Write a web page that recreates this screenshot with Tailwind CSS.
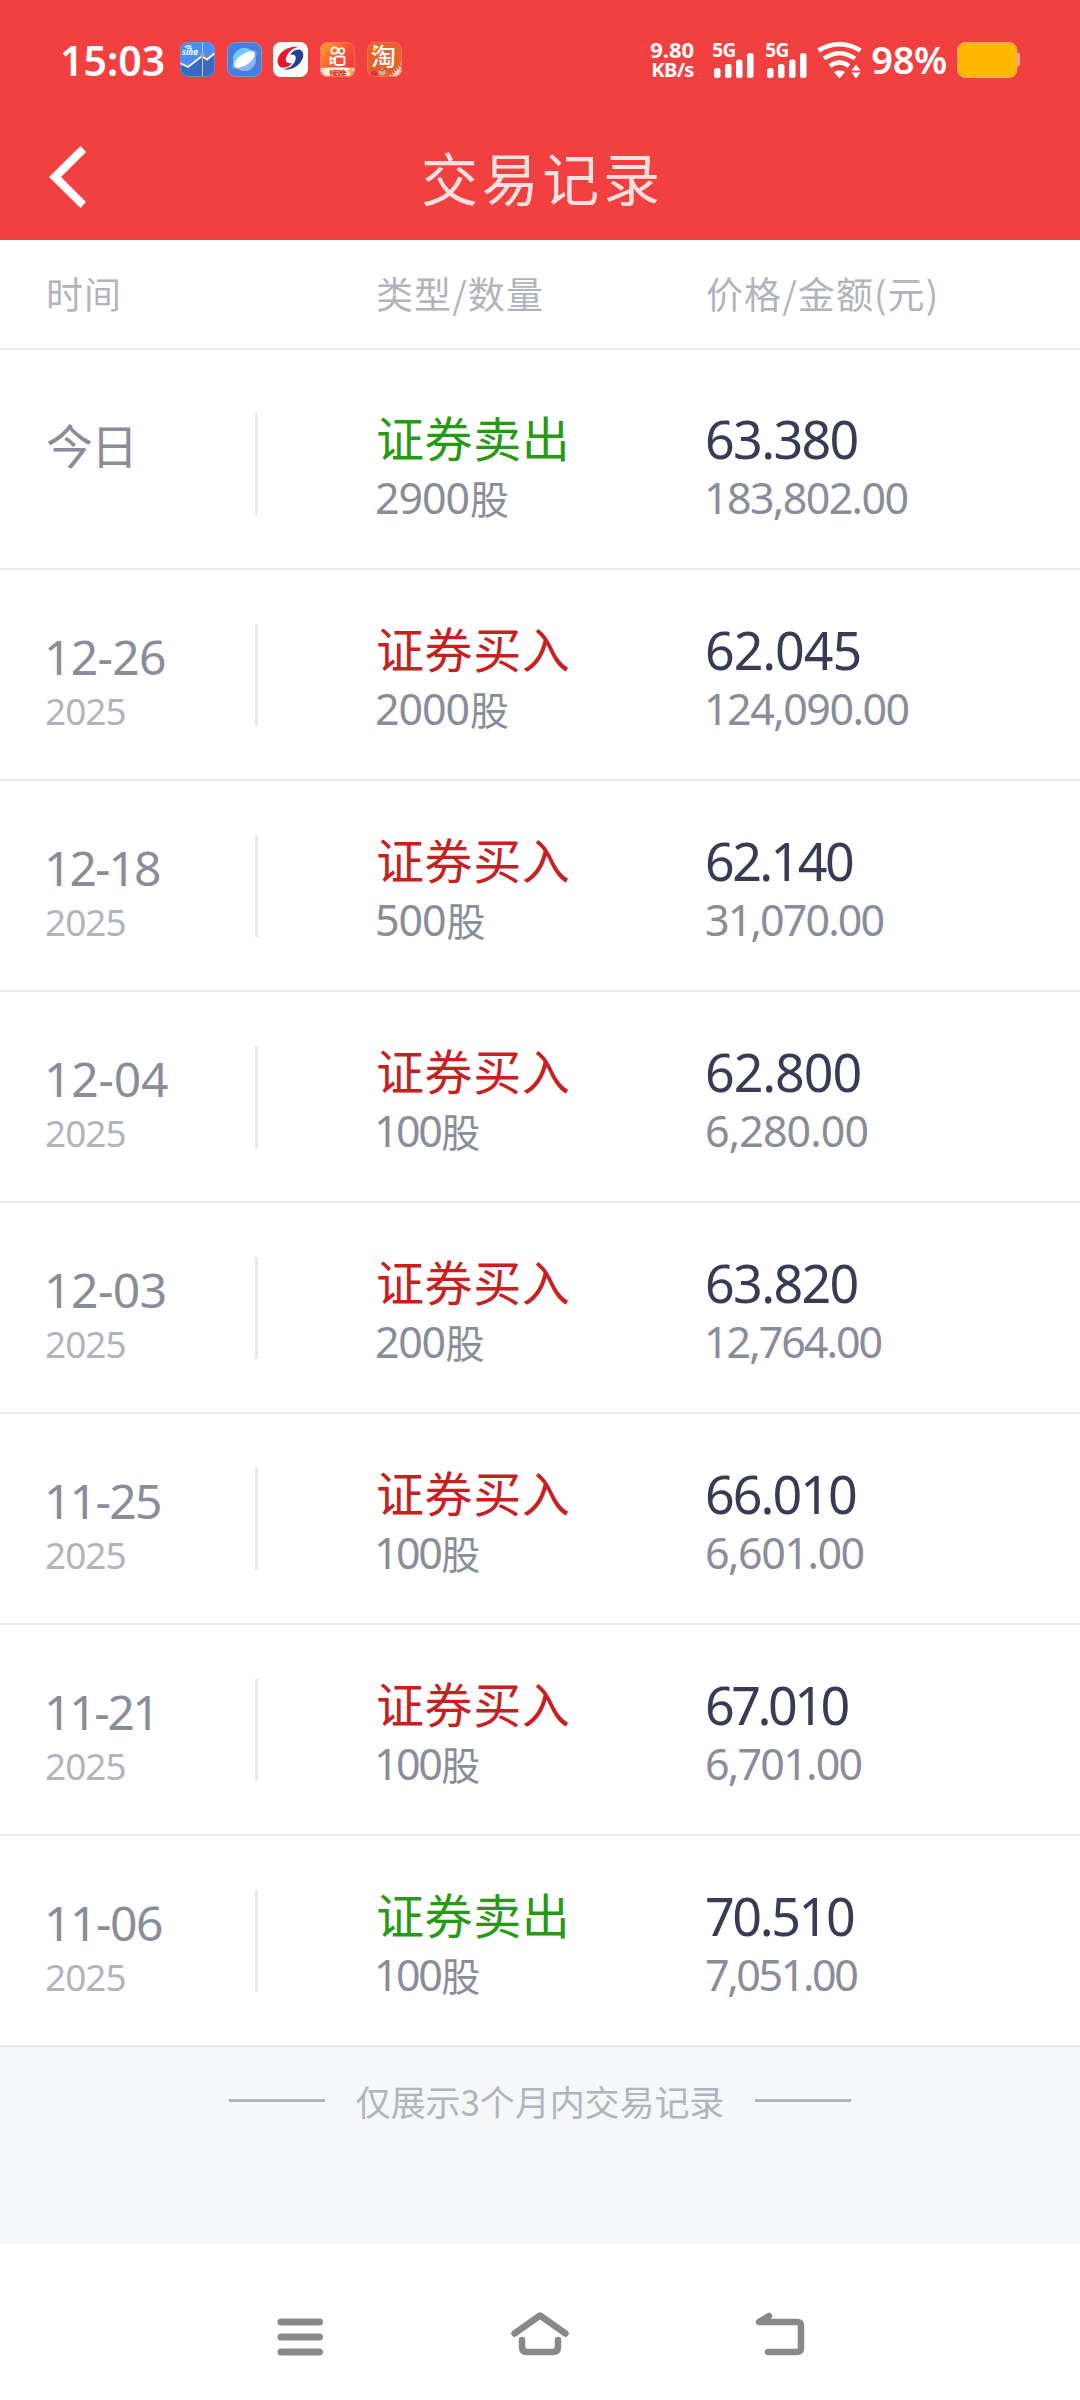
<!DOCTYPE html>
<html lang="zh-CN">
<head>
<meta charset="utf-8">
<title>交易记录</title>
<script src="https://cdn.jsdelivr.net/npm/@tailwindcss/browser@4"></script>
</head>
<body class="w-[1080px] h-[2400px] overflow-hidden bg-white flex flex-col whitespace-nowrap font-['Noto_Sans','Noto_Sans_CJK_SC',sans-serif]">
<header class="h-60 shrink-0 bg-[#f24040] text-white">
  <!-- status bar -->
  <div class="h-[118px] flex items-start">
    <div class="w-[119px] ml-[60px] mt-[35px] text-[41px] leading-[50px] font-semibold">15:03</div>
    <div class="flex gap-[11.7px] mt-[42px] ml-px">
      <svg class="w-[35px] h-[35px]" viewBox="0 0 35 35"><defs><clipPath id="a"><rect width="35" height="35" rx="8"/></clipPath></defs><g clip-path="url(#a)"><rect width="35" height="35" fill="#4a8dff"/><path d="M0 21L8 25 22 13 27 17 35 11V35H0Z" fill="#366bc1"/><path d="M0 21L8 25 22 14 27 17.500 35 11" fill="none" stroke="#fff" stroke-width="1.800"/><path d="M22.500 0V35" stroke="#d9c9a8" stroke-width="1"/><circle cx="22.500" cy="13.500" r="2" fill="#e5a33c"/><path d="M5 5.500Q8 2 12 5M7 7Q9 4.500 12 7.500" fill="none" stroke="#fff" stroke-width="1.300"/></g><text x="2" y="12.500" font-size="8" font-style="italic" font-weight="700" fill="#fff" textLength="16">sina</text><rect x=".5" y=".5" width="34" height="34" rx="8" fill="none" stroke="#8593d6" stroke-opacity=".7"/></svg>
      <svg class="w-[35px] h-[35px]" viewBox="0 0 35 35"><rect x=".5" y=".5" width="34" height="34" rx="8" fill="#447fdf" stroke="#8593d6"/><ellipse cx="17.500" cy="17.500" rx="14.500" ry="6" transform="rotate(-35 17.500 17.500)" fill="#6c9fe8"/><circle cx="17.500" cy="17.500" r="11.500" fill="#8fb4ef"/><path d="M7 22A11.500 11.500 0 0 1 27 11Z" fill="#68cdf8"/><ellipse cx="17.500" cy="17.500" rx="12" ry="5.500" transform="rotate(-35 17.500 17.500)" fill="#fff"/></svg>
      <svg class="w-[35px] h-[35px]" viewBox="0 0 35 35"><rect width="35" height="35" rx="8" fill="#fff"/><path d="M25 5C14 3 2 13 5 22C7 28 16 26 19 21C14 22 11 19 14 14C16 9 20 6 25 5Z" fill="#e5192d"/><path d="M10 27C21 30 32 19 30 11C28 5 20 7 17 13C22 11 24 15 22 19C20 24 15 27 10 27Z" fill="#243f94"/></svg>
      <svg class="w-[35px] h-[35px]" viewBox="0 0 35 35"><defs><linearGradient id="g" x1="0" y1="0" x2="1" y2=".8"><stop stop-color="#ffac30"/><stop offset=".5" stop-color="#ff5a2d"/><stop offset="1" stop-color="#fb2c49"/></linearGradient><clipPath id="b"><rect width="35" height="35" rx="8"/></clipPath></defs><g clip-path="url(#b)"><rect width="35" height="35" fill="url(#g)"/><path d="M0 26Q17 24.500 35 26V35H0Z" fill="#ffefd8"/><path d="M28 29L31 25 34 30 31 33Z" fill="#ffb238"/></g><g fill="none" stroke="#fff" stroke-width="1.800"><circle cx="14.500" cy="8.500" r="3.200"/><circle cx="21.500" cy="9" r="2.800"/><rect x="15" y="14.500" width="9.500" height="8.500" rx="2"/><path d="M15 18L10.500 15.500V21.500L15 19.500"/></g><text x="9" y="33.500" font-size="7" font-weight="900" fill="#d8372c" textLength="18">领现金</text><rect x=".5" y=".5" width="34" height="34" rx="8" fill="none" stroke="#f97556"/></svg>
      <svg class="w-[35px] h-[35px]" viewBox="0 0 35 35"><defs><clipPath id="c"><rect width="35" height="35" rx="8"/></clipPath></defs><g clip-path="url(#c)"><rect width="35" height="35" fill="#e9602c"/><path d="M21 35L35 19V35Z" fill="#f4d3c3"/><path d="M24 33L34 22" stroke="#dd6141" stroke-width="3" stroke-dasharray="2 1"/><circle cx="7" cy="32" r="3.500" fill="#e22d43"/><circle cx="15" cy="30" r="3.500" fill="#d9ad93"/><path d="M12 27L15 29 18 27" stroke="#7b3c28" fill="none"/><circle cx="7.500" cy="7" r="2" fill="#ffc53b"/></g><text x="4" y="23.500" font-size="25" font-weight="500" fill="#fff" font-family="Noto Sans CJK SC">淘</text><rect x=".5" y=".5" width="34" height="34" rx="8" fill="none" stroke="#ee7347"/></svg>
    </div>
    <div class="ml-[248.500px] mt-[39px] w-[62px] font-bold text-[22px] leading-[21px]"><div>9.80</div><div class="text-[20px] leading-5 tracking-[-0.600px] ml-px">KB/s</div></div>
    <div class="relative w-[53px] mt-10 text-[19px] leading-5 font-bold tracking-[-0.500px]">5G<svg class="absolute left-px top-3 w-[42px] h-[27px]" viewBox="0 0 42 27" fill="#fff"><rect x="1" y="16" width="6.500" height="10" rx="2.500"/><rect x="12" y="12" width="6.500" height="14" rx="2.500"/><rect x="23" y="7.500" width="6.500" height="18.500" rx="2.500"/><rect x="34" y="1" width="6.500" height="25" rx="2.500"/></svg></div>
    <div class="relative w-[53px] mt-10 text-[19px] leading-5 font-bold tracking-[-0.500px]">5G<svg class="absolute left-px top-3 w-[42px] h-[27px]" viewBox="0 0 42 27" fill="#fff"><rect x="1" y="16" width="6.500" height="10" rx="2.500"/><rect x="12" y="12" width="6.500" height="14" rx="2.500"/><rect x="23" y="7.500" width="6.500" height="18.500" rx="2.500"/><rect x="34" y="1" width="6.500" height="25" rx="2.500"/></svg></div>
    <svg class="w-[45px] h-[37px] mt-[42px] -ml-px" viewBox="0 0 45 37"><g fill="none" stroke="#fff" stroke-width="4.500"><path d="M1.500 8.500Q22.500 -4 43.500 8.500"/><path d="M7 16.500Q22.500 6 38 16.500"/><path d="M13 24Q22.500 17 32 24"/></g><path d="M17 30Q22.500 26.500 28 30L22.500 36.500ZM34.500 28.500H43.500L39 22.500ZM34.500 30.500H43.500L39 36.500Z" fill="#fff"/></svg>
    <div class="w-[86px] ml-[9px] mt-[34px] text-[38px] leading-[50px] font-semibold tracking-[-0.300px]">98%</div>
    <svg class="w-[64px] h-[36px] mt-[42px]" viewBox="0 0 64 36"><path d="M59 11H61Q63 11 63 13V22Q63 24 61 24H59Z" fill="#fba6a6"/><rect x=".500" y=".500" width="59.500" height="35" rx="8" fill="#ffb800" stroke="#f6a878"/></svg>
  </div>
  <!-- title bar -->
  <div class="h-[122px] flex items-start">
    <svg class="w-[37px] h-[62px] ml-[49px] mt-[28px]" viewBox="0 0 37 62"><path d="M0 31L31.500 0 37 6 12 31 37 56 31.500 62Z" fill="#fff"/></svg>
    <h1 class="ml-[335px] -mt-[3px] text-[57px] leading-[122px] tracking-[3.670px] text-[#fbe0e0] font-['Noto_Sans_CJK_SC',sans-serif]">交易记录</h1>
  </div>
</header>
<div class="h-[110px] shrink-0 border-b-2 border-[#e9e9e9] flex text-[37px] leading-[107px] tracking-[1.100px] text-[#b1b4bd] font-['Noto_Sans_CJK_SC',sans-serif]">
  <div class="w-[330px] pl-[46px]">时间</div><div class="w-[330px] pl-[46px]">类型/数量</div><div class="pl-[46px]">价格/金额(元)</div>
</div>
<main id="list" class="shrink-0"></main>
<footer class="h-[197px] shrink-0 bg-[#f6f7f9]">
  <div class="h-[107px] flex items-center justify-center gap-[31px]">
    <i class="w-24 h-[3px] bg-[#b0b4be]"></i><span class="text-[35px] leading-[106px] tracking-[-0.090px] text-[#b0b4be] font-['Noto_Sans_CJK_SC',sans-serif]">仅展示3个月内交易记录</span><i class="w-24 h-[3px] bg-[#b0b4be]"></i>
  </div>
</footer>
<nav class="flex-1 bg-white flex justify-center gap-[180px] pt-[65px]">
  <svg class="w-[60px] h-[50px]" viewBox="270 2309 60 50" stroke="#898989" stroke-width="7" stroke-linecap="round"><path d="M281 2322H319.500M281 2337H319.500M281 2352H319.500"/></svg>
  <svg class="w-[60px] h-[50px]" viewBox="510 2309 60 50" fill="none" stroke="#898989" stroke-width="6.500" stroke-linecap="round" stroke-linejoin="round"><path d="M514.500 2333.500L540 2315.500 565.500 2333.500M522 2340V2347Q522 2352 527 2352H553Q558 2352 558 2347V2340"/></svg>
  <svg class="w-[60px] h-[50px]" viewBox="750 2309 60 50" fill="none" stroke="#898989" stroke-width="6.500" stroke-linecap="round" stroke-linejoin="round"><path d="M769 2316L759 2322H797Q801 2322 801 2326V2348Q801 2352 797 2352H768"/></svg>
</nav>
<script>
// Each text is [value, letter-spacing class]; the digit 1 is set tighter than the others.
const rows = [
  { date: ['今日', ''], sell: true, qty: ['2900', 'tracking-[-1.100px]'], price: ['63.380', 'tracking-[-1.680px]'], sum: ['183,802.00', 'tracking-[-1.640px]'] },
  { date: ['12-26', 'tracking-[-0.710px]'], qty: ['2000', 'tracking-[-1.100px]'], price: ['62.045', 'tracking-[-1.100px]'], sum: ['124,090.00', 'tracking-[-1.520px]'] },
  { date: ['12-18', 'tracking-[-1.960px]'], qty: ['500', 'tracking-[-1.100px]'], price: ['62.140', 'tracking-[-2.600px]'], sum: ['31,070.00', 'tracking-[-1.890px]'] },
  { date: ['12-04', 'tracking-[-0.210px]'], qty: ['100', 'tracking-[-2.500px]'], price: ['62.800', 'tracking-[-1.100px]'], sum: ['6,280.00', 'tracking-[-0.930px]'] },
  { date: ['12-03', 'tracking-[-0.500px]'], qty: ['200', 'tracking-[-1.400px]'], price: ['63.820', 'tracking-[-1.680px]'], sum: ['12,764.00', 'tracking-[-2.020px]'] },
  { date: ['11-25', 'tracking-[-1.710px]'], qty: ['100', 'tracking-[-2.500px]'], price: ['66.010', 'tracking-[-2px]'], sum: ['6,601.00', 'tracking-[-1.500px]'] },
  { date: ['11-21', 'tracking-[-2.300px]'], qty: ['100', 'tracking-[-2.500px]'], price: ['67.010', 'tracking-[-3.480px]'], sum: ['6,701.00', 'tracking-[-1.790px]'] },
  { date: ['11-06', 'tracking-[-1.460px]'], sell: true, qty: ['100', 'tracking-[-2.500px]'], price: ['70.510', 'tracking-[-2.400px]'], sum: ['7,051.00', 'tracking-[-2.400px]'] },
];
document.getElementById('list').innerHTML = rows.map(r => {
  const today = r.date[0] === '今日';
  const date = today
    ? `<div class="text-[47px] leading-[56px] tracking-[-2px] font-['Noto_Sans_CJK_SC',sans-serif]">今日</div>`
    : `<div class="text-[48px] leading-[60px] -ml-[2px] ${r.date[1]}">${r.date[0]}</div><div class="mt-1 text-[37px] leading-10 -ml-px tracking-[-1px] text-[#b1b4bd]">2025</div>`;
  const name = r.sell ? '<span class="text-[#279a14]">证券卖出</span>' : '<span class="text-[#c7201f]">证券买入</span>';
  const qx = r.qty[0][0] === '1' ? '-ml-[2px]' : '-ml-px';
  const sx = r.sum[0][0] === '1' ? '-ml-[2px]' : '-ml-px';
  return `<section class="${today ? 'h-[220px] pt-[9px]' : 'h-[211px]'} border-b-2 border-[#e9e9e9] flex text-[#898d99]">
    <div class="w-[255px] pl-[46px] pt-[57px]">${date}</div>
    <div class="w-[3px] h-[102px] mt-[54px] bg-[#e9e9e9]"></div>
    <div class="w-[328px] pl-[118px] pt-[47px]"><div class="text-[48px] leading-[60px] tracking-[0.600px] font-['Noto_Sans_CJK_SC',sans-serif]">${name}</div><div class="mt-[7px] h-[50px] flex items-baseline text-[43px] leading-[50px] ${qx}"><span class="${r.qty[1]}">${r.qty[0]}</span><span class="ml-px text-[39px] leading-[44px] font-['Noto_Sans_CJK_SC',sans-serif]">股</span></div></div>
    <div class="pl-[120px] pt-[50px]"><div class="text-[52px] leading-[60px] text-[#373c54] -ml-px ${r.price[1]}">${r.price[0]}</div><div class="mt-1 text-[43px] leading-[50px] ${sx} ${r.sum[1]}">${r.sum[0]}</div></div>
  </section>`;
}).join('');
</script>
</body>
</html>
